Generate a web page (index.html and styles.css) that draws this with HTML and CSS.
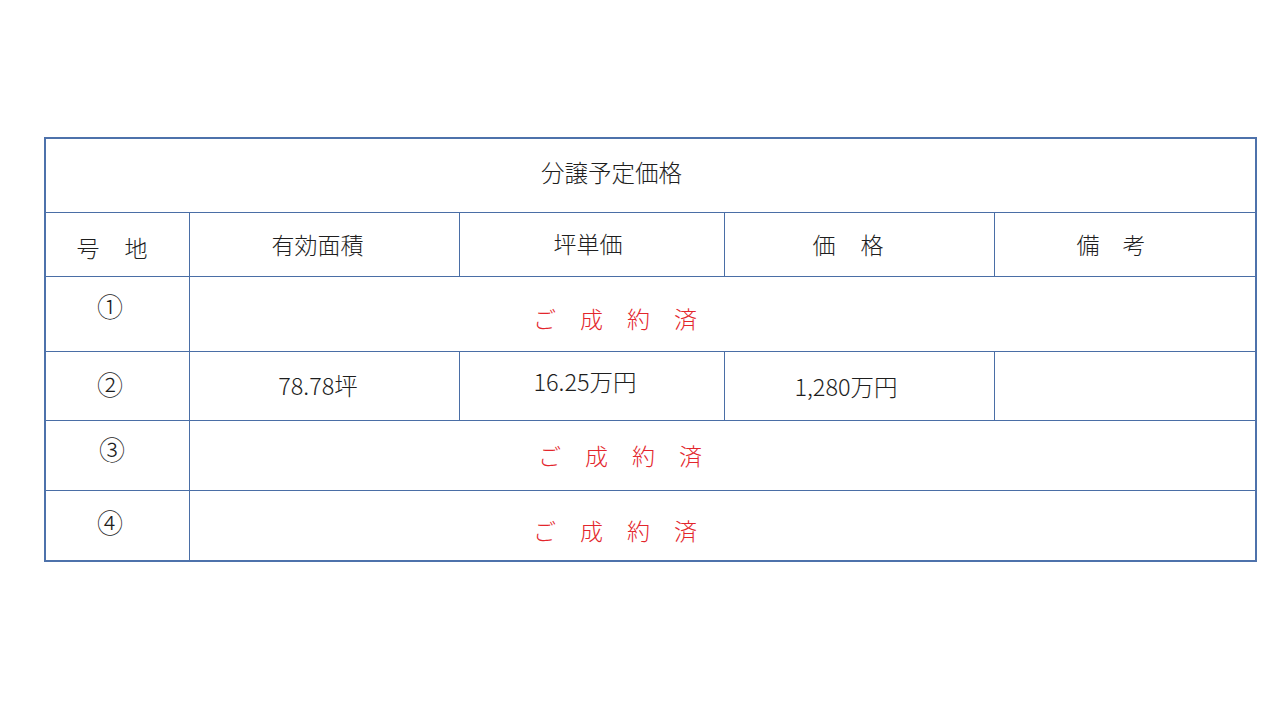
FILE: index.html
```html
<!DOCTYPE html>
<html lang="ja">
<head>
<meta charset="utf-8">
<title>分譲予定価格</title>
<link rel="stylesheet" href="styles.css">
</head>
<body>
<div class="slide">
  <div class="table">
    <div class="cell title span-all">分譲予定価格</div>

    <div class="cell hd hd-no">号　地</div>
    <div class="cell hd hd-area">有効面積</div>
    <div class="cell hd hd-unit">坪単価</div>
    <div class="cell hd hd-price">価　格</div>
    <div class="cell hd hd-note last">備　考</div>

    <div class="cell num n1">①</div>
    <div class="cell sold s1 span-rest">ご　成　約　済</div>

    <div class="cell num n2">②</div>
    <div class="cell val v-area">78.78坪</div>
    <div class="cell val v-unit">16.25万円</div>
    <div class="cell val v-price">1,280万円</div>
    <div class="cell val last"></div>

    <div class="cell num n3">③</div>
    <div class="cell sold s3 span-rest">ご　成　約　済</div>

    <div class="cell num n4 bottom">④</div>
    <div class="cell sold s4 span-rest bottom">ご　成　約　済</div>
  </div>
</div>
</body>
</html>
```

FILE: styles.css
```css
html, body {
  margin: 0;
  padding: 0;
  background: #ffffff;
}

body {
  width: 1280px;
  height: 720px;
  overflow: hidden;
  font-family: "Noto Sans CJK JP", "Noto Sans", sans-serif;
  font-weight: 300;
  color: #1e1e1e;
}

.slide {
  padding-top: 137px;
  padding-left: 44px;
}

.table {
  width: 1213px;
  height: 425px;
  box-sizing: border-box;
  border: 2px solid #4e72ab;
  display: grid;
  grid-template-columns: 144px 270px 265px 270px 1fr;
  grid-template-rows: 74px 64px 75px 69px 70px 69px;
}

.cell {
  box-sizing: border-box;
  border-right: 1px solid #4a6ea6;
  border-bottom: 1px solid #4a6ea6;
  display: flex;
  align-items: center;
  justify-content: center;
  font-size: 23px;
  line-height: 1;
  white-space: pre;
}

.cell.last { border-right: none; }
.cell.bottom { border-bottom: none; }

.span-all { grid-column: 1 / -1; border-right: none; }
.span-rest { grid-column: 2 / -1; border-right: none; }

.title {
  font-size: 23.5px;
  padding-right: 78px;
  padding-bottom: 6px;
}

.hd-no { padding-right: 10px; padding-top: 5px; letter-spacing: 1px; }
.hd-area { padding-right: 14px; }
.hd-unit { padding-right: 8px; padding-bottom: 3px; }
.hd-price { padding-right: 22px; letter-spacing: 1px; }
.hd-note { padding-right: 28px; }

.num { padding-right: 15px; font-size: 26px; }
.n1 { padding-bottom: 16px; }
.n2 { padding-bottom: 4px; }
.n3 { padding-bottom: 13px; padding-right: 11px; }
.n4 { padding-bottom: 7px; }

.val { font-size: 23.5px; }
.v-area { padding-right: 13px; }
.v-unit { padding-right: 14px; padding-bottom: 8px; }
.v-price { padding-right: 27px; padding-top: 2px; }

.sold {
  color: #e3262c;
  justify-content: flex-start;
  letter-spacing: 0.5px;
}
.s1 { padding-left: 343px; padding-top: 8px; }
.s3 { padding-left: 348px; }
.s4 { padding-left: 343px; padding-top: 9px; }
```
